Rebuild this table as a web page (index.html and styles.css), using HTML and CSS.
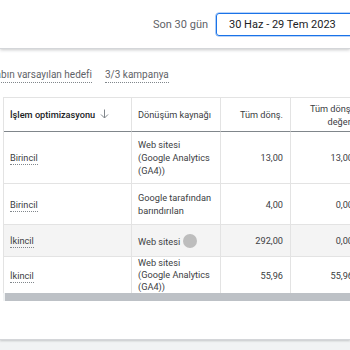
FILE: index.html
```html
<!DOCTYPE html>
<html lang="tr">
<head>
<meta charset="utf-8">
<title>Dönüşümler</title>
<link rel="stylesheet" href="styles.css">
</head>
<body>
<header class="topbar">
  <span class="range-label">Son 30 gün</span>
  <div class="date-box">30 Haz - 29 Tem 2023</div>
</header>
<main class="card">
  <div class="goals">
    <span class="goal">Hesabın varsayılan hedefi</span>
    <span class="goal">3/3 kampanya</span>
  </div>
  <div class="table-wrap">
    <table class="conv">
      <thead>
        <tr>
          <th class="c1 strong">İşlem optimizasyonu<svg class="sort" width="9" height="10" viewBox="0 0 9 10"><path d="M4.5 0.5V9M1 5.5L4.5 9L8 5.5" fill="none" stroke="#80868b" stroke-width="1"/></svg></th>
          <th class="c2">Dönüşüm kaynağı</th>
          <th class="c3 num">Tüm dönş.</th>
          <th class="c4 num">Tüm dönş. değeri</th>
        </tr>
      </thead>
      <tbody>
        <tr class="r1">
          <td><span class="dotted">Birincil</span></td>
          <td>Web sitesi (Google Analytics (GA4))</td>
          <td class="num">13,00</td>
          <td class="num">13,00</td>
        </tr>
        <tr class="r2">
          <td><span class="dotted">Birincil</span></td>
          <td>Google tarafından barındırılan</td>
          <td class="num">4,00</td>
          <td class="num">0,00</td>
        </tr>
        <tr class="r3">
          <td><span class="dotted">İkincil</span></td>
          <td>Web sitesi<span class="dot"></span></td>
          <td class="num">292,00</td>
          <td class="num">0,00</td>
        </tr>
        <tr class="r4">
          <td><span class="dotted">İkincil</span></td>
          <td>Web sitesi (Google Analytics (GA4))</td>
          <td class="num">55,96</td>
          <td class="num">55,96</td>
        </tr>
      </tbody>
    </table>
  </div>
  <div class="scroll-track"><div class="scroll-thumb"></div></div>
</main>
</body>
</html>
```

FILE: styles.css
```css
html, body {
  margin: 0;
  padding: 0;
}
body {
  width: 350px;
  height: 350px;
  overflow: hidden;
  background: #f1f3f4;
  font-family: Roboto, "Liberation Sans", Arial, sans-serif;
  color: #3c4043;
}

.topbar {
  position: relative;
  z-index: 1;
  height: 48px;
  background: #fff;
  border-bottom: 1px solid #d4d6d9;
  box-shadow: 0 1px 3px rgba(60, 64, 67, 0.28);
  display: flex;
  align-items: center;
  padding-left: 153px;
  white-space: nowrap;
}
.range-label {
  font-size: 11px;
  color: #5f6368;
  margin-right: 8px;
}
.date-box {
  flex: none;
  box-sizing: border-box;
  width: 150px;
  height: 23px;
  border: 1px solid #1a73e8;
  box-shadow: 0 0 0 0.6px rgba(26, 115, 232, 0.6);
  border-radius: 3px;
  padding-left: 12px;
  display: flex;
  align-items: center;
  font-size: 11px;
  color: #202124;
}

.card {
  display: block;
  background: #fff;
  padding-top: 19px;
  padding-bottom: 38px;
  border-bottom: 1px solid #d4d6d9;
  box-shadow: 0 1px 2px rgba(60, 64, 67, 0.25);
}

.goals {
  display: flex;
  gap: 13px;
  margin-left: -22px;
  font-size: 10px;
  line-height: 14px;
  color: #5f6368;
  white-space: nowrap;
}
.goal {
  border-bottom: 1px dotted #80868b;
}

.table-wrap {
  margin-top: 14px;
  margin-left: 3px;
  height: 195px;
  overflow: hidden;
  border-top: 1px solid #e3e3e3;
  border-left: 1px solid #e3e3e3;
}
.conv {
  border-collapse: separate;
  border-spacing: 0;
  table-layout: fixed;
  width: 357px;
  font-size: 9.2px;
  line-height: 13px;
}
.conv th, .conv td {
  padding: 0 7px 0 6px;
  border-right: 1px solid #e3e3e3;
  border-bottom: 1px solid #e3e3e3;
  vertical-align: middle;
  text-align: left;
  overflow: hidden;
}
.conv th {
  height: 33px;
  font-weight: 400;
  color: #3c4043;
  border-bottom-color: #80868b;
  box-sizing: content-box;
}
.conv th.c1 { width: 114px; }
.conv th.c2 { width: 75px; }
.conv th.c3 { width: 56px; }
.conv th.c4 { width: 56px; }
.conv th.strong {
  font-weight: 500;
  color: #202124;
  white-space: nowrap;
}
.sort {
  margin-left: 5px;
  vertical-align: -1px;
}
.conv .num {
  text-align: right;
}
.dotted {
  border-bottom: 1px dotted #80868b;
  padding-bottom: 1px;
}
.r1 td { height: 51px; }
.r2 td { height: 40px; }
.r3 td { height: 31px; background: #f4f4f4; }
.r4 td {
  height: 38px;
  line-height: 12px;
}
.r4 td:nth-child(2) {
  vertical-align: top;
}
.dot {
  display: inline-block;
  width: 14px;
  height: 14px;
  margin-left: 3px;
  border-radius: 50%;
  background: #bdbdbd;
  vertical-align: -3px;
}

.scroll-track {
  margin-left: 3px;
  height: 8px;
  background: #f1f3f4;
  padding-left: 2px;
}
.scroll-thumb {
  height: 8px;
  background: #bdc1c6;
}
```
